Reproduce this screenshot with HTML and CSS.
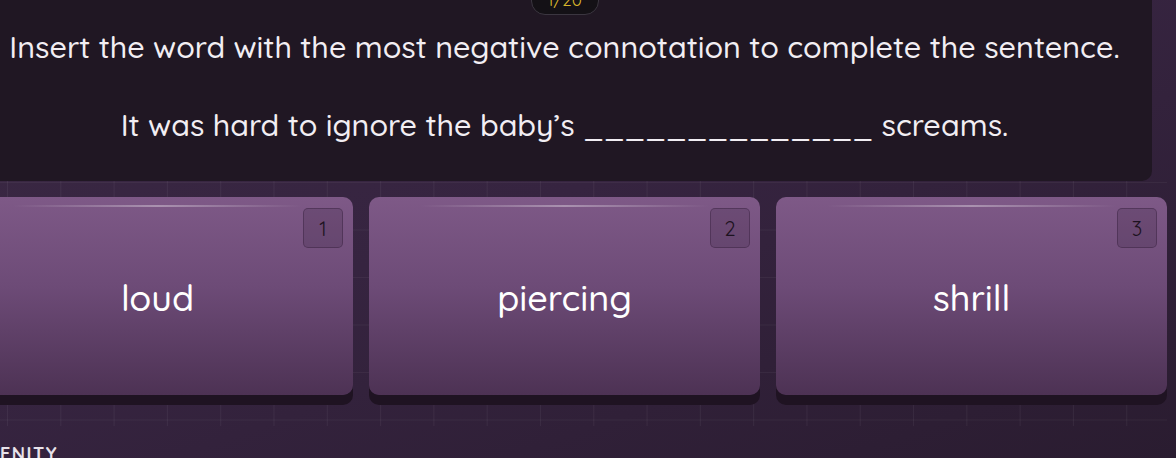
FILE: index.html
```html
<!DOCTYPE html>
<html lang="en">
<head>
<meta charset="utf-8">
<title>Quiz</title>
<link rel="stylesheet" href="styles.css">
</head>
<body>
<div class="stage">
  <section class="question">
    <div class="counter">1/20</div>
    <p class="prompt">Insert the word with the most negative connotation to complete the sentence.</p>
    <p class="sentence">It was hard to ignore the baby’s ______________ screams.</p>
  </section>
  <section class="board">
    <div class="answers">
      <div class="answer"><span class="key">1</span><span class="word">loud</span></div>
      <div class="answer"><span class="key">2</span><span class="word">piercing</span></div>
      <div class="answer"><span class="key">3</span><span class="word">shrill</span></div>
    </div>
  </section>
  <footer class="brand">SERENITY</footer>
</div>
</body>
</html>
```
FILE: styles.css
```css
html, body {
  margin: 0;
  padding: 0;
}
body {
  width: 1176px;
  height: 458px;
  overflow: hidden;
  background: linear-gradient(160deg, #3b2944 0%, #362440 45%, #2a1c30 100%);
  font-family: "Quicksand", "Lato", "Noto Sans", sans-serif;
  color: #f2eef3;
}
.stage {
  margin-left: -38px;
  width: 1205px;
  display: flex;
  flex-direction: column;
}
.question {
  position: relative;
  margin: -20px 15px 0 15px;
  height: 201px;
  box-sizing: border-box;
  padding-top: 47px;
  background: #201723;
  border-radius: 0 0 10px 10px;
  display: flex;
  flex-direction: column;
  align-items: center;
}
.counter {
  position: absolute;
  top: 0;
  left: 50%;
  transform: translateX(-50%);
  width: 68px;
  height: 35px;
  box-sizing: border-box;
  border: 1px solid #3b3640;
  border-radius: 0 0 14px 14px;
  background: #141116;
  color: #d8b62c;
  font-size: 17px;
  text-align: center;
  line-height: 38px;
}
.prompt, .sentence {
  margin: 0;
  font-size: 30.5px;
  font-weight: 500;
  line-height: 40px;
  white-space: nowrap;
}
.sentence {
  margin-top: 38px;
}
.board {
  padding: 16px 0 21px 0;
  background-image:
    linear-gradient(to right, rgba(255,255,255,0.05) 1px, transparent 1px),
    linear-gradient(to bottom, rgba(255,255,255,0.045) 1px, transparent 1px);
  background-size: 53.3px 47.5px;
  background-position: 45px 1px;
}
.answers {
  display: grid;
  grid-template-columns: repeat(3, 1fr);
  gap: 16px;
}
.answer {
  position: relative;
  height: 198px;
  margin-bottom: 10px;
  border-radius: 10px;
  background: linear-gradient(180deg, #7e5987 0%, #6d4b77 45%, #4d3254 100%);
  box-shadow: 0 10px 0 #1f1322;
  display: flex;
  align-items: center;
  justify-content: center;
}
.answer::before {
  content: "";
  position: absolute;
  top: 8px;
  left: 13%;
  right: 13%;
  height: 2px;
  background: linear-gradient(90deg, rgba(255,255,255,0) 0%, rgba(255,255,255,0.35) 50%, rgba(255,255,255,0) 100%);
}
.key {
  position: absolute;
  top: 11px;
  right: 10px;
  width: 40px;
  height: 40px;
  box-sizing: border-box;
  border: 1px solid rgba(40,20,45,0.35);
  border-radius: 5px;
  background: rgba(40,20,45,0.18);
  color: #1d1220;
  font-size: 20px;
  display: flex;
  align-items: center;
  justify-content: center;
}
.word {
  font-size: 36px;
  font-weight: 500;
  color: #ffffff;
  margin-top: 2px;
}
.brand {
  padding: 16px 0 0 0;
  font-size: 18px;
  font-weight: 700;
  letter-spacing: 1.5px;
  color: #e8e2ea;
}
```
